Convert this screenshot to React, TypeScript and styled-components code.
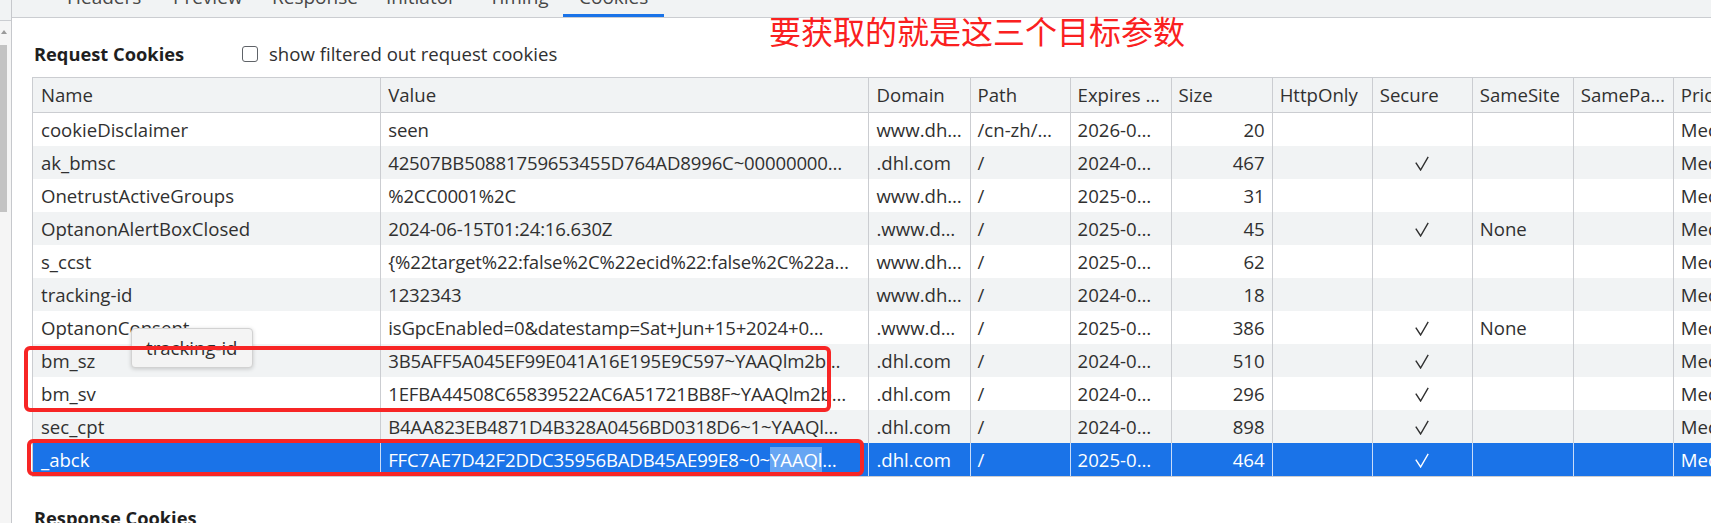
import * as React from "react";
import styled, { createGlobalStyle, css } from "styled-components";

const GlobalStyle = createGlobalStyle`
  html, body {
    margin: 0;
    padding: 0;
    background: #fff;
  }
  body {
    width: 1711px;
    height: 523px;
    overflow: hidden;
    font-family: "Open Sans", "Noto Sans", sans-serif;
  }
`;

const Page = styled.div`
  position: relative;
  display: flex;
  width: 1711px;
  height: 523px;
  overflow: hidden;
  color: #303030;
  font-size: 18.6px;
`;

const Rail = styled.div`
  flex: none;
  width: 11px;
  display: flex;
  flex-direction: column;
  background: #f5f5f5;
  border-right: 1px solid #c6c8cc;
`;

const RailCap = styled.div`
  height: 20px;
  background: #f1f3f4;
  border-bottom: 1px solid #cbcdd1;
`;

const RailArrow = styled.div`
  margin: 9px 0 0 1px;
  width: 0;
  height: 0;
  border-left: 3px solid transparent;
  border-right: 3px solid transparent;
  border-bottom: 4px solid #9a9a9a;
`;

const RailThumb = styled.div`
  margin-top: 11px;
  width: 7px;
  height: 167px;
  background: #c3c3c3;
`;

const Main = styled.div`
  flex: 1;
  min-width: 0;
  display: flex;
  flex-direction: column;
`;

const TabBar = styled.div`
  flex: none;
  height: 17px;
  display: flex;
  background: #f1f3f4;
  border-bottom: 1px solid #cbcdd1;
  overflow: hidden;
`;

const CloseBox = styled.div`
  flex: none;
  width: 39px;
  color: #b4b8bd;
  font-size: 18px;
  line-height: 18px;
  padding-left: 16px;
  box-sizing: border-box;
  margin-top: -15px;
`;

const Tab = styled.div<{ $w: number; $active?: boolean }>`
  flex: none;
  width: ${(p) => p.$w}px;
  height: 17px;
  box-sizing: border-box;
  padding-left: 16px;
  border-bottom: 3px solid ${(p) => (p.$active ? "#1a73e8" : "transparent")};
  color: #474747;
  font-size: 19px;
  line-height: 24px;
  white-space: nowrap;
`;

const TabLabel = styled.span`
  display: block;
  margin-top: -15px;
`;

const Content = styled.div`
  flex: 1;
  min-height: 0;
  padding-left: 20px;
  background: #fff;
  overflow: hidden;
`;

const SectionHead = styled.div<{ $top: number }>`
  display: flex;
  align-items: center;
  height: 24px;
  padding-top: ${(p) => p.$top}px;
  margin-bottom: 11px;
`;

const SectionTitle = styled.div`
  flex: 0 0 208px;
  padding-left: 2px;
  font-weight: 700;
  font-size: 18.3px;
  line-height: 24px;
  color: #1f1f1f;
  white-space: nowrap;
`;

const CheckLabel = styled.label`
  display: flex;
  align-items: center;
  gap: 11px;
  line-height: 24px;
  color: #303030;
  white-space: nowrap;
`;

const CheckBox = styled.span`
  width: 16px;
  height: 16px;
  box-sizing: border-box;
  border: 1.5px solid #5f6368;
  border-radius: 3px;
  background: #fff;
`;

const Grid = styled.table`
  table-layout: fixed;
  width: 1742px;
  border-spacing: 0;
  border-collapse: separate;
  border: 1px solid #cbcdd1;
  font-size: 18.6px;
`;

const HeadCell = styled.th`
  height: 35px;
  padding: 0 7px;
  box-sizing: border-box;
  background: #f1f3f4;
  border-left: 1px solid #cbcdd1;
  border-bottom: 1px solid #cbcdd1;
  font-weight: 400;
  text-align: left;
  line-height: 34px;
  color: #303030;
  white-space: nowrap;
  overflow: hidden;
  text-overflow: clip;
  &:first-child {
    border-left: none;
    padding-left: 8px;
  }
`;

const Row = styled.tr<{ $stripe: boolean; $selected: boolean }>`
  background: ${(p) => (p.$selected ? "#1a73e8" : p.$stripe ? "#f1f3f4" : "#fff")};
  color: ${(p) => (p.$selected ? "#fff" : "#303030")};
  ${(p) =>
    p.$selected &&
    css`
      & > td {
        border-left-color: #c9dcf9;
      }
    `}
`;

const Cell = styled.td<{ $align?: "left" | "right" | "center"; $tight?: boolean }>`
  height: 33px;
  padding: 0 7px;
  box-sizing: border-box;
  border-left: 1px solid #cbcdd1;
  text-align: ${(p) => p.$align ?? "left"};
  letter-spacing: ${(p) => (p.$tight ? "-0.17px" : "normal")};
  line-height: 33px;
  white-space: nowrap;
  overflow: hidden;
  text-overflow: clip;
  &:first-child {
    border-left: none;
    padding-left: 8px;
  }
`;

const Picked = styled.span`
  background: #66a5f3;
`;

const Check = styled.svg`
  display: inline-block;
  vertical-align: middle;
  margin-top: -3px;
`;

const Tooltip = styled.div`
  position: absolute;
  left: 131px;
  top: 328px;
  width: 122px;
  height: 40px;
  box-sizing: border-box;
  padding-left: 14px;
  background: #f4f4f4;
  border: 1px solid #d2d2d2;
  border-radius: 4px;
  box-shadow: 0 1px 4px rgba(0, 0, 0, 0.18);
  color: #303030;
  font-size: 18.6px;
  line-height: 37px;
`;

const Marker = styled.div<{ $x: number; $y: number; $w: number; $h: number }>`
  position: absolute;
  left: ${(p) => p.$x}px;
  top: ${(p) => p.$y}px;
  width: ${(p) => p.$w}px;
  height: ${(p) => p.$h}px;
  box-sizing: border-box;
  border: 4px solid #f72525;
  border-radius: 6px;
  pointer-events: none;
`;

const Note = styled.div`
  position: absolute;
  left: 769px;
  top: 14px;
  color: #fa2020;
  font-family: "Noto Sans CJK SC", "Noto Sans", sans-serif;
  font-size: 32px;
  line-height: 32px;
  white-space: nowrap;
`;

const cols = [347, 488, 101, 100, 101, 101, 100, 100, 101, 100, 100];
const headers = [
  "Name",
  "Value",
  "Domain",
  "Path",
  "Expires …",
  "Size",
  "HttpOnly",
  "Secure",
  "SameSite",
  "SamePa…",
  "Priority",
];

type Cookie = {
  name: string;
  value: React.ReactNode;
  domain: string;
  path: string;
  expires: string;
  size: number;
  secure: boolean;
  sameSite: string;
};

const cookies: Cookie[] = [
  { name: "cookieDisclaimer", value: "seen", domain: "www.dh…", path: "/cn-zh/…", expires: "2026-0…", size: 20, secure: false, sameSite: "" },
  { name: "ak_bmsc", value: "42507BB50881759653455D764AD8996C~00000000…", domain: ".dhl.com", path: "/", expires: "2024-0…", size: 467, secure: true, sameSite: "" },
  { name: "OnetrustActiveGroups", value: "%2CC0001%2C", domain: "www.dh…", path: "/", expires: "2025-0…", size: 31, secure: false, sameSite: "" },
  { name: "OptanonAlertBoxClosed", value: "2024-06-15T01:24:16.630Z", domain: ".www.d…", path: "/", expires: "2025-0…", size: 45, secure: true, sameSite: "None" },
  { name: "s_ccst", value: "{%22target%22:false%2C%22ecid%22:false%2C%22a…", domain: "www.dh…", path: "/", expires: "2025-0…", size: 62, secure: false, sameSite: "" },
  { name: "tracking-id", value: "1232343", domain: "www.dh…", path: "/", expires: "2024-0…", size: 18, secure: false, sameSite: "" },
  { name: "OptanonConsent", value: "isGpcEnabled=0&datestamp=Sat+Jun+15+2024+0…", domain: ".www.d…", path: "/", expires: "2025-0…", size: 386, secure: true, sameSite: "None" },
  { name: "bm_sz", value: "3B5AFF5A045EF99E041A16E195E9C597~YAAQlm2b…", domain: ".dhl.com", path: "/", expires: "2024-0…", size: 510, secure: true, sameSite: "" },
  { name: "bm_sv", value: "1EFBA44508C65839522AC6A51721BB8F~YAAQlm2b…", domain: ".dhl.com", path: "/", expires: "2024-0…", size: 296, secure: true, sameSite: "" },
  { name: "sec_cpt", value: "B4AA823EB4871D4B328A0456BD0318D6~1~YAAQl…", domain: ".dhl.com", path: "/", expires: "2024-0…", size: 898, secure: true, sameSite: "" },
  {
    name: "_abck",
    value: (
      <>
        FFC7AE7D42F2DDC35956BADB45AE99E8~0~<Picked>YAAQl</Picked>…
      </>
    ),
    domain: ".dhl.com",
    path: "/",
    expires: "2025-0…",
    size: 464,
    secure: true,
    sameSite: "",
  },
];

const tabs = [
  { label: "Headers", w: 106 },
  { label: "Preview", w: 99 },
  { label: "Response", w: 114 },
  { label: "Initiator", w: 103 },
  { label: "Timing", w: 90 },
  { label: "Cookies", w: 101, active: true },
];

function CheckMark() {
  return (
    <Check width="14" height="15" viewBox="0 0 14 15">
      <path d="M0.8 6.6 L5.6 14 L13.2 0.8" fill="none" stroke="currentColor" strokeWidth="1.4" />
    </Check>
  );
}

export default function App() {
  const selected = cookies.length - 1;
  return (
    <Page>
      <GlobalStyle />
      <Rail>
        <RailCap />
        <RailArrow />
        <RailThumb />
      </Rail>
      <Main>
        <TabBar>
          <CloseBox>×</CloseBox>
          {tabs.map((t) => (
            <Tab key={t.label} $w={t.w} $active={t.active}>
              <TabLabel>{t.label}</TabLabel>
            </Tab>
          ))}
        </TabBar>
        <Content>
          <SectionHead $top={24}>
            <SectionTitle>Request Cookies</SectionTitle>
            <CheckLabel>
              <CheckBox />
              show filtered out request cookies
            </CheckLabel>
          </SectionHead>
          <Grid>
            <colgroup>
              {cols.map((w, i) => (
                <col key={i} style={{ width: w }} />
              ))}
            </colgroup>
            <thead>
              <tr>
                {headers.map((h) => (
                  <HeadCell key={h}>{h}</HeadCell>
                ))}
              </tr>
            </thead>
            <tbody>
              {cookies.map((c, i) => (
                <Row key={c.name} $stripe={i % 2 === 1} $selected={i === selected}>
                  <Cell>{c.name}</Cell>
                  <Cell $tight>{c.value}</Cell>
                  <Cell>{c.domain}</Cell>
                  <Cell>{c.path}</Cell>
                  <Cell>{c.expires}</Cell>
                  <Cell $align="right">{c.size}</Cell>
                  <Cell />
                  <Cell $align="center">{c.secure ? <CheckMark /> : null}</Cell>
                  <Cell>{c.sameSite}</Cell>
                  <Cell />
                  <Cell>Medium</Cell>
                </Row>
              ))}
            </tbody>
          </Grid>
          <SectionHead $top={29}>
            <SectionTitle>Response Cookies</SectionTitle>
          </SectionHead>
        </Content>
      </Main>
      <Note>要获取的就是这三个目标参数</Note>
      <Tooltip>tracking-id</Tooltip>
      <Marker $x={24} $y={346} $w={807} $h={66} />
      <Marker $x={27} $y={439} $w={837} $h={37} />
    </Page>
  );
}
